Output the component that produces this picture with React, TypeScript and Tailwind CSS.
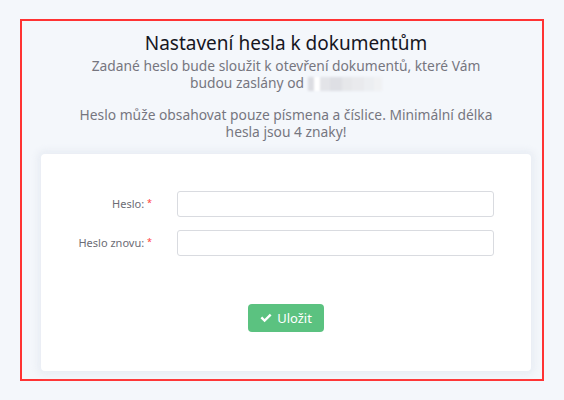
import React from 'react';

const Blurred = () => (
  <span className="inline-flex items-center align-middle gap-0 ml-1 blur-[1px]">
    <span className="w-[6px] h-[14px] bg-[#dcdde2]" />
    <span className="w-[6px] h-[14px] bg-white" />
    <span className="w-[10px] h-[14px] bg-[#e3e4e8]" />
    <span className="w-[12px] h-[14px] bg-[#dedfe4]" />
    <span className="w-[10px] h-[14px] bg-[#e6e7ea]" />
    <span className="w-[12px] h-[14px] bg-[#e9eaed]" />
    <span className="w-[10px] h-[14px] bg-[#eceef1]" />
    <span className="w-[8px] h-[14px] bg-[#f0f1f3]" />
  </span>
);

const Field = ({ label }: { label: string }) => (
  <div className="flex items-center">
    <label className="w-[111px] text-right text-[11px] text-[#6c6c75]">
      {label}: <span className="text-[#ff3b3b] text-[9px] align-top">*</span>
    </label>
    <input
      type="password"
      className="ml-[25px] w-[317px] h-[26px] border border-[#d9dbe0] rounded-[3px] bg-white outline-none"
    />
  </div>
);

export default function App() {
  return (
    <div className="w-[564px] h-[400px] bg-[#f4f7fb] pt-[19px] px-[20px] font-['Noto_Sans',sans-serif]">
      <div className="border-2 border-[#ff3333] h-[362px] pl-[19px] pr-[11px] pt-[9px]">
        <div className="text-center">
          <h1 className="text-[19px] leading-[26px] text-[#16161f]">Nastavení hesla k dokumentům</h1>
          <div className="mx-auto w-[420px] text-[13.8px] leading-[17px] text-[#76767f] mt-[1px]">
            <p>
              Zadané heslo bude sloužit k otevření dokumentů, které Vám budou zaslány od
              <Blurred />
            </p>
            <p className="mt-[15px]">
              Heslo může obsahovat pouze písmena a číslice. Minimální délka hesla jsou 4 znaky!
            </p>
          </div>
        </div>
        <div className="mt-[14px] h-[217px] bg-white rounded-[4px] shadow-[0_0_6px_4px_rgba(226,232,240,0.6)] pt-[37px]">
          <div className="flex flex-col gap-[13px]">
            <Field label="Heslo" />
            <Field label="Heslo znovu" />
          </div>
          <div className="flex justify-center mt-[48px]">
            <button className="h-[28px] px-[12px] bg-[#5bc280] rounded-[4px] text-white text-[13px] flex items-center gap-[5px]">
              <svg width="12" height="10" viewBox="0 0 12 10" fill="white">
                <path d="M0.5 5.2 L2.2 3.5 L4.6 5.9 L9.8 0.7 L11.5 2.4 L4.6 9.3 Z" />
              </svg>
              Uložit
            </button>
          </div>
        </div>
      </div>
    </div>
  );
}
